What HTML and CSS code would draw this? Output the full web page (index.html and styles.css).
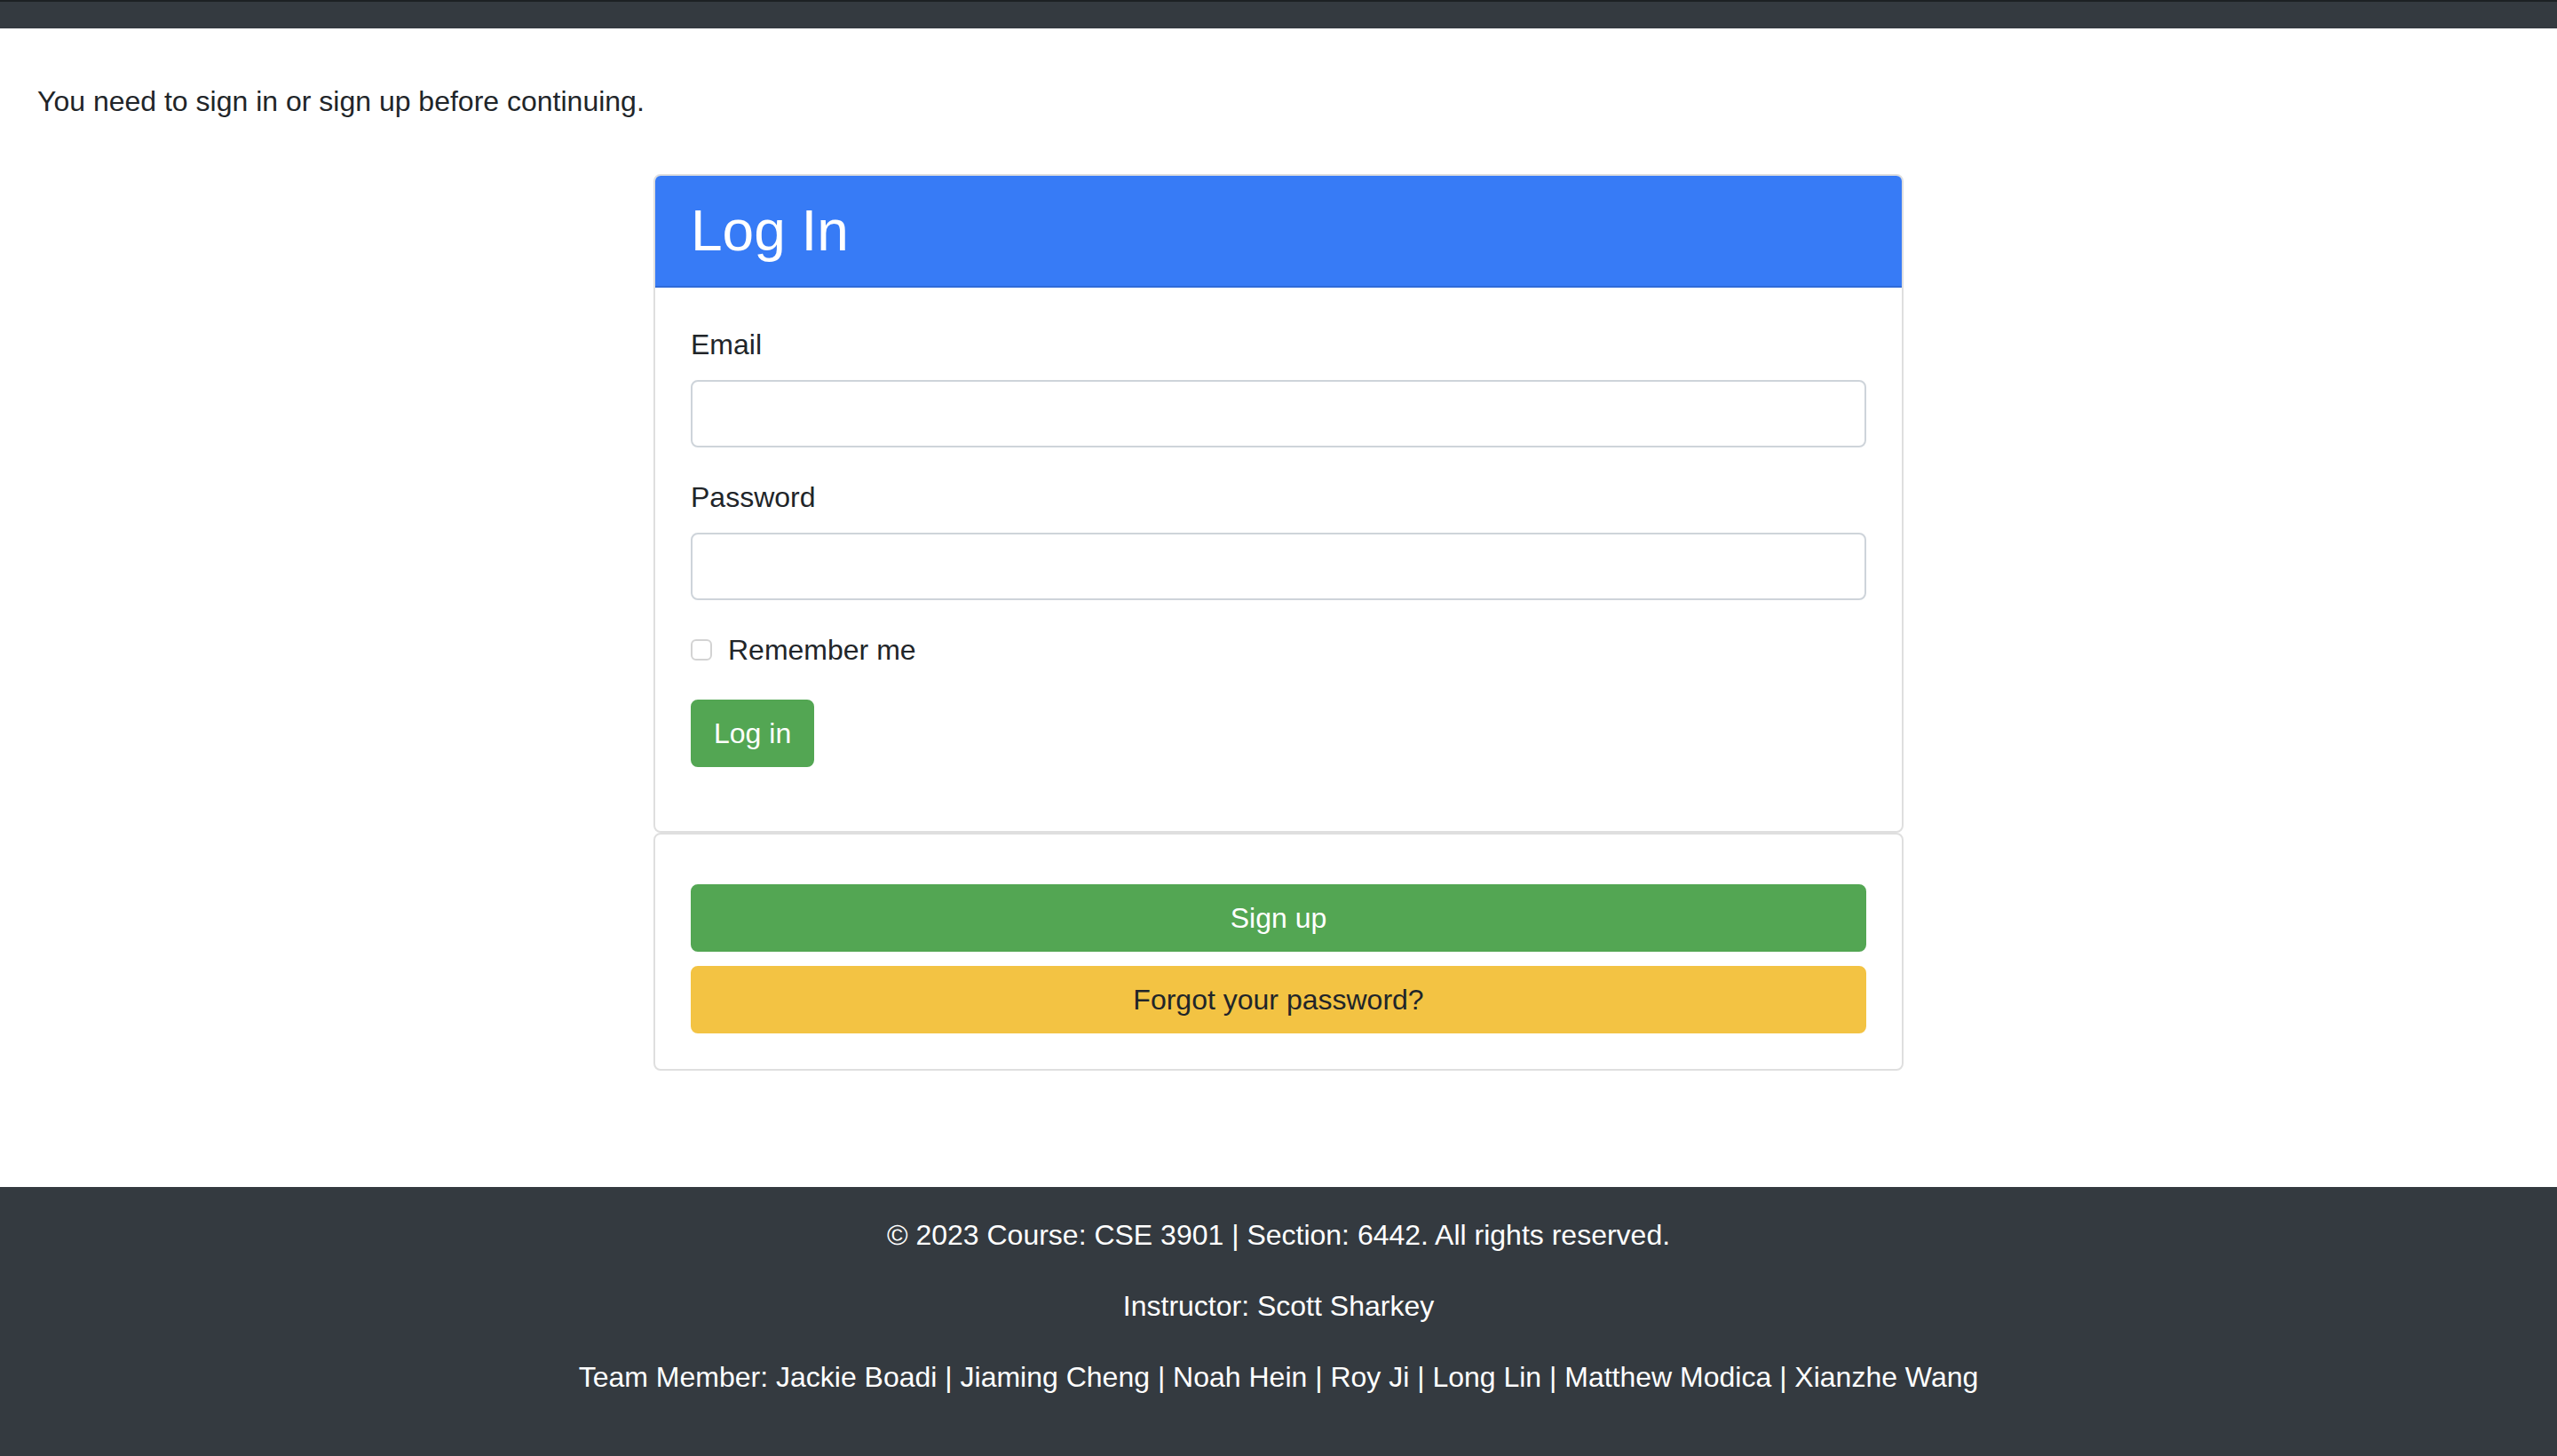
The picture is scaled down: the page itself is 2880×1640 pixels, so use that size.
FILE: index.html
```html
<!DOCTYPE html>
<html lang="en">
<head>
<meta charset="utf-8">
<title>Log In</title>
<link rel="stylesheet" href="styles.css">
</head>
<body>
<nav class="topbar"></nav>
<main class="main">
  <p class="notice">You need to sign in or sign up before continuing.</p>
  <div class="login-wrap">
    <section class="card">
      <header class="card-header"><h2 class="card-title">Log In</h2></header>
      <form class="card-body">
        <div class="field">
          <label class="field-label" for="email">Email</label>
          <input class="field-input" id="email" type="email">
        </div>
        <div class="field">
          <label class="field-label" for="password">Password</label>
          <input class="field-input" id="password" type="password">
        </div>
        <div class="check-row">
          <span class="check-box"></span>
          <span class="check-label">Remember me</span>
        </div>
        <div class="actions">
          <button type="button" class="btn btn-green">Log in</button>
        </div>
      </form>
    </section>
    <section class="card">
      <div class="card-body card-links">
        <button type="button" class="btn btn-green btn-block">Sign up</button>
        <button type="button" class="btn btn-yellow btn-block">Forgot your password?</button>
      </div>
    </section>
  </div>
</main>
<footer class="footer">
  <p>© 2023 Course: CSE 3901 | Section: 6442. All rights reserved.</p>
  <p>Instructor: Scott Sharkey</p>
  <p>Team Member: Jackie Boadi | Jiaming Cheng | Noah Hein | Roy Ji | Long Lin | Matthew Modica | Xianzhe Wang</p>
</footer>
</body>
</html>
```
FILE: styles.css
```css
* { box-sizing: border-box; }
html, body { margin: 0; padding: 0; }
body {
  font-family: "Liberation Sans", Arial, sans-serif;
  font-size: 32px;
  line-height: 48px;
  color: #212529;
  background: #fff;
}
.topbar {
  height: 32px;
  background: #343a40;
  border-top: 2px solid #1d2124;
}
.main {
  padding: 58px 0 0;
}
.notice {
  margin: 0 0 58px;
  padding-left: 42px;
}
.login-wrap {
  width: 1408px;
  margin: 0 auto;
}
.card {
  border: 2px solid #dfdfdf;
  border-radius: 8px;
  overflow: hidden;
  background: #fff;
}
.card-header {
  background: #377bf6;
  color: #fff;
  padding: 24px 40px 23px;
  border-bottom: 2px solid #2f6bd8;
}
.card-title {
  margin: 0;
  font-size: 64px;
  line-height: 77px;
  font-weight: 500;
}
.card-body {
  padding: 40px;
  margin: 0;
}
.field { margin-bottom: 32px; }
.field-label {
  display: block;
  margin-bottom: 16px;
}
.field-input {
  display: block;
  width: 100%;
  height: 76px;
  border: 2px solid #ced4da;
  border-radius: 8px;
  background: #fff;
  font: inherit;
  padding: 12px 24px;
}
.check-row {
  display: flex;
  align-items: center;
  height: 48px;
  margin-bottom: 32px;
}
.check-box {
  width: 24px;
  height: 24px;
  border: 2px solid #d3d3d3;
  border-radius: 6px;
  margin-right: 18px;
  background: #fff;
}
.actions { margin-bottom: 32px; }
.btn {
  display: inline-block;
  font: inherit;
  line-height: 48px;
  padding: 12px 24px;
  border: 2px solid transparent;
  border-radius: 8px;
  cursor: pointer;
}
.btn-green { background: #53a653; border-color: #53a653; color: #fff; }
.btn-yellow { background: #f3c343; border-color: #f3c343; color: #212529; }
.btn-block { display: block; width: 100%; text-align: center; }
.card-links { padding-top: 56px; }
.card-links .btn-block + .btn-block { margin-top: 16px; }
.footer {
  margin-top: 131px;
  background: #343a40;
  color: #fff;
  text-align: center;
  padding: 30px 0 34px;
}
.footer p { margin: 0 0 32px; }
```
